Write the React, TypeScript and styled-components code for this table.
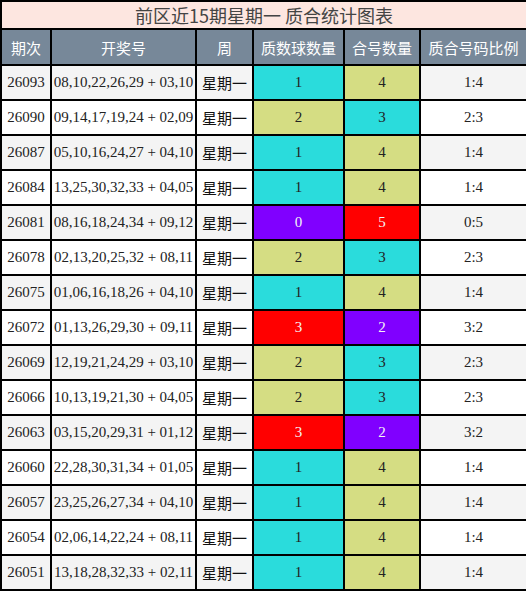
import styled, { createGlobalStyle } from 'styled-components';

const GlobalStyle = createGlobalStyle`
  html, body {
    margin: 0;
    padding: 0;
    background: #ffffff;
  }
`;

type Tone = 'cyan' | 'yellow' | 'purple' | 'red';

const toneColors: Record<Tone, string> = {
  cyan: '#2adcdc',
  yellow: '#d5dd83',
  purple: '#8000ff',
  red: '#ff0000',
};

// 比例 -> [质数球颜色, 合号颜色]
const ratioTones: Record<string, [Tone, Tone]> = {
  '0:5': ['purple', 'red'],
  '1:4': ['cyan', 'yellow'],
  '2:3': ['yellow', 'cyan'],
  '3:2': ['red', 'purple'],
};

type Row = {
  issue: string;
  nums: string;
  prime: number;
  composite: number;
};

const rows: Row[] = [
  { issue: '26093', nums: '08,10,22,26,29 + 03,10', prime: 1, composite: 4 },
  { issue: '26090', nums: '09,14,17,19,24 + 02,09', prime: 2, composite: 3 },
  { issue: '26087', nums: '05,10,16,24,27 + 04,10', prime: 1, composite: 4 },
  { issue: '26084', nums: '13,25,30,32,33 + 04,05', prime: 1, composite: 4 },
  { issue: '26081', nums: '08,16,18,24,34 + 09,12', prime: 0, composite: 5 },
  { issue: '26078', nums: '02,13,20,25,32 + 08,11', prime: 2, composite: 3 },
  { issue: '26075', nums: '01,06,16,18,26 + 04,10', prime: 1, composite: 4 },
  { issue: '26072', nums: '01,13,26,29,30 + 09,11', prime: 3, composite: 2 },
  { issue: '26069', nums: '12,19,21,24,29 + 03,10', prime: 2, composite: 3 },
  { issue: '26066', nums: '10,13,19,21,30 + 04,05', prime: 2, composite: 3 },
  { issue: '26063', nums: '03,15,20,29,31 + 01,12', prime: 3, composite: 2 },
  { issue: '26060', nums: '22,28,30,31,34 + 01,05', prime: 1, composite: 4 },
  { issue: '26057', nums: '23,25,26,27,34 + 04,10', prime: 1, composite: 4 },
  { issue: '26054', nums: '02,06,14,22,24 + 08,11', prime: 1, composite: 4 },
  { issue: '26051', nums: '13,18,28,32,33 + 02,11', prime: 1, composite: 4 },
];

const headers = ['期次', '开奖号', '周', '质数球数量', '合号数量', '质合号码比例'];
const colWidths = [50, 145, 57, 91, 76, 107];

const App = () => {
  return (
    <>
      <GlobalStyle />
      <Table>
        <colgroup>
          {colWidths.map((w, i) => (
            <col key={i} style={{ width: w }} />
          ))}
        </colgroup>
        <thead>
          <tr>
            <TitleCell colSpan={6}>前区近15期星期一 质合统计图表</TitleCell>
          </tr>
          <tr>
            {headers.map((h) => (
              <HeadCell key={h}>{h}</HeadCell>
            ))}
          </tr>
        </thead>
        <tbody>
          {rows.map((row, i) => {
            const ratio = `${row.prime}:${row.composite}`;
            const [pTone, cTone] = ratioTones[ratio];
            const striped = i % 2 === 0;
            return (
              <tr key={row.issue}>
                <Cell $striped={striped}>{row.issue}</Cell>
                <Cell $striped={striped}>{row.nums}</Cell>
                <WeekCell $striped={striped}>星期一</WeekCell>
                <CountCell $tone={pTone}>{row.prime}</CountCell>
                <CountCell $tone={cTone}>{row.composite}</CountCell>
                <Cell $striped={striped}>{ratio}</Cell>
              </tr>
            );
          })}
        </tbody>
      </Table>
    </>
  );
};
export default App;

const Table = styled.table`
  width: 526px;
  table-layout: fixed;
  border-collapse: collapse;
  border: 2px solid #000;
`;

const TitleCell = styled.th`
  height: 26px;
  padding: 0;
  border: 2px solid #000;
  background: #fde6e0;
  color: #444;
  font-family: 'Noto Sans CJK SC', 'Noto Sans', sans-serif;
  font-size: 18px;
  font-weight: normal;
  text-align: center;
  line-height: 26px;
`;

const HeadCell = styled.th`
  height: 34px;
  padding: 0;
  border: 2px solid #000;
  background: #778899;
  color: #ffffff;
  font-family: 'Noto Sans CJK SC', 'Noto Sans', sans-serif;
  font-size: 15px;
  font-weight: normal;
  text-align: center;
  white-space: nowrap;
`;

const Cell = styled.td<{ $striped: boolean }>`
  height: 33px;
  padding: 0;
  border: 2px solid #000;
  background: ${(p) => (p.$striped ? '#f4f4f4' : '#ffffff')};
  color: #222;
  font-family: 'Liberation Serif', 'Noto Sans CJK SC', serif;
  font-size: 15px;
  text-align: center;
  white-space: nowrap;
`;

const WeekCell = styled(Cell)`
  font-family: 'Noto Sans CJK SC', sans-serif;
  font-size: 15px;
  color: #111;
`;

const CountCell = styled.td<{ $tone: Tone }>`
  height: 33px;
  padding: 0;
  border: 2px solid #000;
  background: ${(p) => toneColors[p.$tone]};
  color: ${(p) => (p.$tone === 'purple' || p.$tone === 'red' ? '#f4f4f4' : '#222')};
  font-family: 'Liberation Serif', serif;
  font-size: 15px;
  text-align: center;
`;
